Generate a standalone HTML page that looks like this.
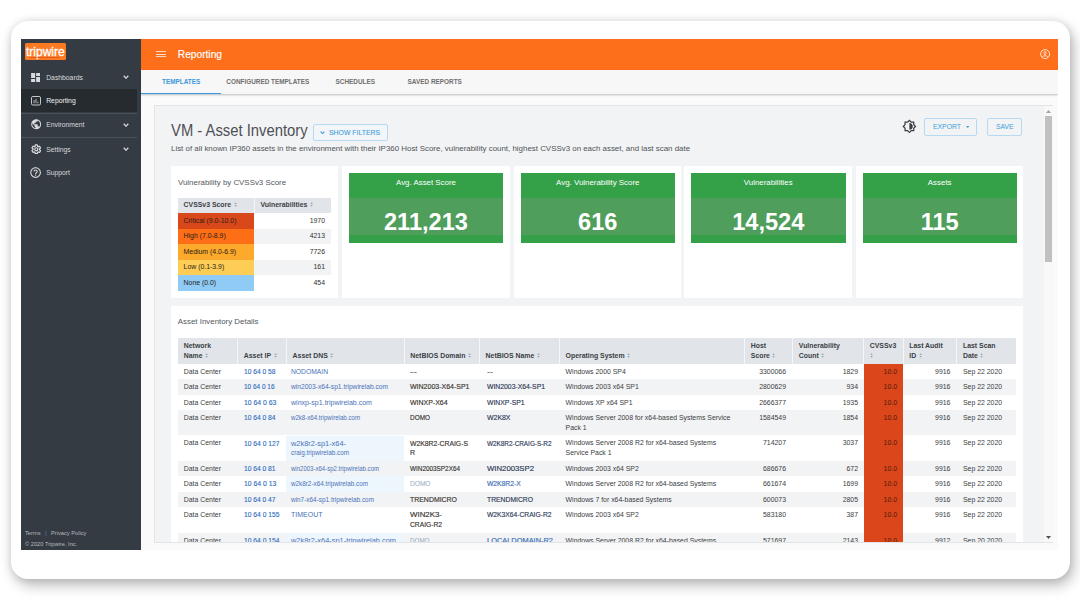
<!DOCTYPE html>
<html><head><meta charset="utf-8">
<style>
*{box-sizing:border-box;margin:0;padding:0}
html,body{width:1080px;height:606px;overflow:hidden;background:#fff;font-family:"Liberation Sans",sans-serif;color:#333}
.abs{position:absolute}
#card{position:absolute;left:11px;top:21px;width:1058.6px;height:557.7px;border-radius:17px;background:#fff;box-shadow:3px 6px 14px rgba(0,0,0,0.28),0 0 8px rgba(0,0,0,0.1)}
#screen{position:absolute;left:21px;top:39px;width:1037px;height:511px;background:#fafafa;overflow:hidden}
#side{position:absolute;left:0;top:0;width:120px;height:511px;background:#353b42}
#hdr{position:absolute;left:120px;top:0;width:917px;height:31px;background:#fd6f1b}
#tabs{position:absolute;left:120px;top:31px;width:917px;height:24px;background:#f7f7f7;box-shadow:0 1px 2px rgba(0,0,0,0.25)}
.tab{position:absolute;top:0;height:24px;line-height:24px;font-size:6.4px;font-weight:bold;color:#6f6f6f;letter-spacing:0}
.txt{position:absolute;white-space:nowrap}
</style></head><body>
<div id="card"></div>
<div id="screen">
  <div id="side">
    <div class="abs" style="left:4px;top:4px;width:40.8px;height:17px;background:#fd7a22;border-radius:1.5px;overflow:hidden">
      <div class="txt" style="left:0.6px;top:0.02px;font-size:13.5px;line-height:17px;color:#fff;transform:scaleX(0.89);transform-origin:0 0;-webkit-text-stroke:0.35px #fff">tripwire</div>
      <div class="abs" style="left:5px;top:14.3px;width:30px;height:0.6px;background:#d9461b;opacity:0.6"></div>
    </div>
    <svg class="abs" style="left:9.9px;top:33.8px" width="9.3" height="9.1" viewBox="3 3 18 18"><path fill="#d9dcdf" d="M3 13h8V3H3v10zm0 8h8v-6H3v6zm10 0h8V11h-8v10zm0-18v6h8V3h-8z"/></svg>
    <div class="txt" style="left:25.2px;top:36.2px;font-size:6.8px;line-height:6.8px;color:#d6d9dc">Dashboards</div>
    <svg class="abs" style="left:101.75px;top:36.4px" width="6" height="4" viewBox="0 0 6 4"><path d="M0.7 0.7L3 3.2L5.3 0.7" fill="none" stroke="#d0d3d6" stroke-width="1.3"/></svg>
    <div class="abs" style="left:0;top:50px;width:116px;height:22.5px;background:#262b30"></div>
    <svg class="abs" style="left:9.6px;top:57.2px" width="10" height="9.5" viewBox="0 0 20 19"><rect x="1" y="1" width="18" height="17" rx="2.5" fill="none" stroke="#d9dcdf" stroke-width="1.8"/><rect x="5.3" y="8" width="1.6" height="6.5" fill="#d9dcdf"/><rect x="9.2" y="5.5" width="1.6" height="9" fill="#d9dcdf"/><rect x="13.1" y="11.5" width="1.6" height="3" fill="#d9dcdf"/></svg>
    <div class="txt" style="left:25.2px;top:58.9px;font-size:6.8px;line-height:6.8px;color:#f0f1f2">Reporting</div>
    <div class="abs" style="left:0;top:74.2px;width:116px;height:1px;background:#4b5158"></div>
    <svg class="abs" style="left:9.7px;top:80.3px" width="10.4" height="10.4" viewBox="1.5 1.5 21 21"><path fill="#d9dcdf" d="M12 2C6.48 2 2 6.48 2 12s4.48 10 10 10 10-4.48 10-10S17.52 2 12 2zm-1 17.93c-3.95-.49-7-3.85-7-7.93 0-.62.08-1.21.21-1.79L9 15v1c0 1.1.9 2 2 2v1.93zm6.9-2.54c-.26-.81-1-1.39-1.9-1.39h-1v-3c0-.55-.45-1-1-1H8v-2h2c.55 0 1-.45 1-1V7h2c1.1 0 2-.9 2-2v-.41c2.93 1.19 5 4.06 5 7.41 0 2.08-.8 3.97-2.1 5.39z"/></svg>
    <div class="txt" style="left:25.2px;top:83.0px;font-size:6.8px;line-height:6.8px;color:#d6d9dc">Environment</div>
    <svg class="abs" style="left:101.75px;top:84.4px" width="6" height="4" viewBox="0 0 6 4"><path d="M0.7 0.7L3 3.2L5.3 0.7" fill="none" stroke="#d0d3d6" stroke-width="1.3"/></svg>
    <div class="abs" style="left:0;top:97.8px;width:116px;height:1px;background:#4b5158"></div>
    <svg class="abs" style="left:9.6px;top:104.8px" width="10.6" height="10.6" viewBox="0 0 24 24"><path fill="none" stroke="#d9dcdf" stroke-width="2.8" d="M19.43 12.98c.04-.32.07-.64.07-.98s-.03-.66-.07-.98l2.11-1.65c.19-.15.24-.42.12-.64l-2-3.46c-.12-.22-.39-.3-.61-.22l-2.49 1c-.52-.4-1.08-.73-1.69-.98l-.38-2.65C14.46 2.18 14.25 2 14 2h-4c-.25 0-.46.18-.49.42l-.38 2.65c-.61.25-1.17.59-1.69.98l-2.49-1c-.23-.09-.49 0-.61.22l-2 3.46c-.13.22-.07.49.12.64l2.11 1.65c-.04.32-.07.65-.07.98s.03.66.07.98l-2.11 1.65c-.19.15-.24.42-.12.64l2 3.46c.12.22.39.3.61.22l2.49-1c.52.4 1.08.73 1.69.98l.38 2.650c.03.24.24.42.49.42h4c.25 0 .46-.18.49-.42l.38-2.65c.61-.25 1.17-.59 1.69-.98l2.49 1c.23.09.49 0 .61-.22l2-3.46c.12-.22.07-.49-.12-.64l-2.11-1.65zM12 15.5c-1.93 0-3.5-1.57-3.5-3.5s1.57-3.5 3.5-3.5 3.5 1.57 3.5 3.5-1.57 3.5-3.5 3.5z" /></svg>
    <div class="txt" style="left:25.2px;top:107.7px;font-size:6.8px;line-height:6.8px;color:#d6d9dc">Settings</div>
    <svg class="abs" style="left:101.75px;top:108.4px" width="6" height="4" viewBox="0 0 6 4"><path d="M0.7 0.7L3 3.2L5.3 0.7" fill="none" stroke="#d0d3d6" stroke-width="1.3"/></svg>
    <svg class="abs" style="left:9.2px;top:128.2px" width="11.2" height="11.2" viewBox="1.5 1.5 21 21"><path fill="#d9dcdf" d="M11 18h2v-2h-2v2zm1-16C6.48 2 2 6.48 2 12s4.48 10 10 10 10-4.48 10-10S17.52 2 12 2zm0 18c-4.41 0-8-3.59-8-8s3.59-8 8-8 8 3.59 8 8-3.59 8-8 8zm0-14c-2.21 0-4 1.79-4 4h2c0-1.1.9-2 2-2s2 .9 2 2c0 2-3 1.75-3 5h2c0-2.25 3-2.5 3-5 0-2.21-1.79-4-4-4z"/></svg>
    <div class="txt" style="left:25.2px;top:131.0px;font-size:6.8px;line-height:6.8px;color:#d6d9dc">Support</div>
    <div class="txt" style="left:4px;top:491.6px;font-size:5.7px;line-height:5.7px;color:#b5babf">Terms<span style="color:#5b8bd0;margin:0 4.2px 0 4.8px">|</span>Privacy Policy</div>
    <div class="txt" style="left:4px;top:502.9px;font-size:5.7px;line-height:5.7px;color:#b5babf">© 2020 Tripwire, Inc.</div>
  </div>
  <div id="hdr">
    <div class="abs" style="left:15.3px;top:12px;width:9.3px;height:0.85px;background:rgba(255,240,230,0.85)"></div>
    <div class="abs" style="left:15.3px;top:14.6px;width:9.3px;height:0.85px;background:rgba(255,240,230,0.85)"></div>
    <div class="abs" style="left:15.3px;top:17.4px;width:9.3px;height:0.85px;background:rgba(255,240,230,0.85)"></div>
    <div class="txt" style="left:36.8px;top:10.8px;font-size:10.2px;line-height:10.2px;color:#fff;-webkit-text-stroke:0.15px #fff">Reporting</div>
    <svg class="abs" style="left:899px;top:9.9px" width="10.2" height="10.2" viewBox="0 0 20 20"><circle cx="10" cy="10" r="8.8" fill="none" stroke="#fff2e8" stroke-width="1.8"/><ellipse cx="10" cy="8" rx="2.2" ry="3" fill="none" stroke="#fff2e8" stroke-width="1.5"/><path d="M4.5 15.5c1.5-1.6 3.5-2.3 5.5-2.3s4 .7 5.5 2.3" fill="none" stroke="#fff2e8" stroke-width="1.6"/></svg>
  </div>
  <div id="tabs">
    <div class="tab" style="left:21px;color:#3b97dc">TEMPLATES</div>
    <div class="tab" style="left:85.3px">CONFIGURED TEMPLATES</div>
    <div class="tab" style="left:194.6px">SCHEDULES</div>
    <div class="tab" style="left:266.6px">SAVED REPORTS</div>
    <div class="abs" style="left:0;top:22.5px;width:79.5px;height:1.6px;background:#3b97dc"></div>
  </div>
</div>
<div class="abs" style="left:153.50px;top:105.30px;width:899.00px;height:437.70px;background:#f2f3f5;border:1px solid #e2e4e7"></div>
<div class="abs" style="left:0;top:0;width:1080px;height:606px;clip-path:inset(106.3px 28px 64px 154.5px)">
<div class="txt" style="left:170.60px;top:121.79px;font-size:16.2px;line-height:16.2px;color:#4d5056;transform:scaleX(0.915);transform-origin:0 0">VM - Asset Inventory</div>
<div class="abs" style="left:313.00px;top:123.70px;width:75.40px;height:17.30px;border:1px solid #b6daf3;border-radius:2px;background:#f3f6f9"></div>
<svg class="abs" style="left:320px;top:131px" width="5" height="3.4" viewBox="0 0 5 3.4"><path d="M0.6 0.6L2.5 2.6L4.4 0.6" fill="none" stroke="#419dda" stroke-width="1.1"/></svg>
<div class="txt" style="left:328.70px;top:128.77px;font-size:7.6px;line-height:7.6px;color:#419dda;-webkit-text-stroke:0.1px #419dda;transform:scaleX(0.906);transform-origin:0 0">SHOW FILTERS</div>
<div class="txt" style="left:171.00px;top:144.50px;font-size:7.92px;line-height:7.92px;color:#4f5357;">List of all known IP360 assets in the environment with their IP360 Host Score, vulnerability count, highest CVSSv3 on each asset, and last scan date</div>
<svg class="abs" style="left:902px;top:119.3px" width="14.8" height="14.8" viewBox="0 0 24 24"><path fill="#3a3d41" d="M20 15.31L23.31 12 20 8.69V4h-4.69L12 .69 8.69 4H4v4.69L.69 12 4 15.31V20h4.69L12 23.31 15.31 20H20v-4.69zm-2-.83V18h-3.52L12 20.48 9.52 18H6v-3.52L3.52 12 6 9.52V6h3.52L12 3.52 14.48 6H18v3.52L20.48 12 18 14.48zM12 6.5v11c3.03 0 5.5-2.47 5.5-5.5S15.03 6.5 12 6.5z"/></svg>
<div class="abs" style="left:924.40px;top:118.00px;width:52.50px;height:17.50px;border:1px solid #b6daf3;border-radius:2px"></div>
<div class="txt" style="left:933.10px;top:123.15px;font-size:7.8px;line-height:7.8px;color:#419dda;transform:scaleX(0.874);transform-origin:0 0">EXPORT</div>
<svg class="abs" style="left:965.6px;top:126.2px" width="3.4" height="2" viewBox="0 0 4 2.4"><path d="M0 0H4L2 2.4z" fill="#419dda"/></svg>
<div class="abs" style="left:987.25px;top:118.00px;width:34.25px;height:17.50px;border:1px solid #b6daf3;border-radius:2px"></div>
<div class="txt" style="left:995.60px;top:123.15px;font-size:7.8px;line-height:7.8px;color:#419dda;transform:scaleX(0.866);transform-origin:0 0">SAVE</div>
<div class="abs" style="left:171.00px;top:165.60px;width:167.20px;height:132.80px;background:#fff"></div>
<div class="abs" style="left:342.00px;top:165.60px;width:167.50px;height:132.80px;background:#fff"></div>
<div class="abs" style="left:514.00px;top:165.60px;width:167.00px;height:132.80px;background:#fff"></div>
<div class="abs" style="left:684.00px;top:165.60px;width:168.00px;height:132.80px;background:#fff"></div>
<div class="abs" style="left:855.50px;top:165.60px;width:167.90px;height:132.80px;background:#fff"></div>
<div class="abs" style="left:349.00px;top:173.00px;width:154.00px;height:70.00px;background:#34a048"></div>
<div class="abs" style="left:349.00px;top:197.80px;width:154.00px;height:37.60px;background:#4f9e5b"></div>
<div class="txt" style="left:226.00px;width:400px;text-align:center;top:179.31px;font-size:7.9px;line-height:7.9px;color:#fff;">Avg. Asset Score</div>
<div class="txt" style="left:226.00px;width:400px;text-align:center;top:211.02px;font-size:23.6px;line-height:23.6px;color:#fff;font-weight:bold">211,213</div>
<div class="abs" style="left:521.00px;top:173.00px;width:153.50px;height:70.00px;background:#34a048"></div>
<div class="abs" style="left:521.00px;top:197.80px;width:153.50px;height:37.60px;background:#4f9e5b"></div>
<div class="txt" style="left:397.75px;width:400px;text-align:center;top:179.31px;font-size:7.9px;line-height:7.9px;color:#fff;">Avg. Vulnerability Score</div>
<div class="txt" style="left:397.75px;width:400px;text-align:center;top:211.02px;font-size:23.6px;line-height:23.6px;color:#fff;font-weight:bold">616</div>
<div class="abs" style="left:691.00px;top:173.00px;width:154.50px;height:70.00px;background:#34a048"></div>
<div class="abs" style="left:691.00px;top:197.80px;width:154.50px;height:37.60px;background:#4f9e5b"></div>
<div class="txt" style="left:568.25px;width:400px;text-align:center;top:179.31px;font-size:7.9px;line-height:7.9px;color:#fff;">Vulnerabilities</div>
<div class="txt" style="left:568.25px;width:400px;text-align:center;top:211.02px;font-size:23.6px;line-height:23.6px;color:#fff;font-weight:bold">14,524</div>
<div class="abs" style="left:862.50px;top:173.00px;width:154.40px;height:70.00px;background:#34a048"></div>
<div class="abs" style="left:862.50px;top:197.80px;width:154.40px;height:37.60px;background:#4f9e5b"></div>
<div class="txt" style="left:739.70px;width:400px;text-align:center;top:179.31px;font-size:7.9px;line-height:7.9px;color:#fff;">Assets</div>
<div class="txt" style="left:739.70px;width:400px;text-align:center;top:211.02px;font-size:23.6px;line-height:23.6px;color:#fff;font-weight:bold">115</div>
<div class="txt" style="left:178.00px;top:178.71px;font-size:7.9px;line-height:7.9px;color:#54585d;">Vulnerability by CVSSv3 Score</div>
<div class="abs" style="left:177.50px;top:197.50px;width:153.50px;height:15.60px;background:#e1e5ea"></div>
<div class="abs" style="left:254.00px;top:197.50px;width:1.00px;height:15.60px;background:#f4f6f8"></div>
<div class="txt" style="left:183.60px;top:201.96px;font-size:6.9px;line-height:6.9px;color:#3b3f44;font-weight:bold">CVSSv3 Score<svg width="3.2" height="5" viewBox="0 0 4 6" style="margin-left:2.5px;vertical-align:-0.3px"><path d="M2 0.3L3.6 2.3H0.4z M2 5.7L3.6 3.7H0.4z" fill="#9aa3ad"/></svg></div>
<div class="txt" style="left:260.50px;top:201.96px;font-size:6.9px;line-height:6.9px;color:#3b3f44;font-weight:bold">Vulnerabilities<svg width="3.2" height="5" viewBox="0 0 4 6" style="margin-left:2.5px;vertical-align:-0.3px"><path d="M2 0.3L3.6 2.3H0.4z M2 5.7L3.6 3.7H0.4z" fill="#9aa3ad"/></svg></div>
<div class="abs" style="left:177.50px;top:213.10px;width:76.50px;height:15.50px;background:#d9481b"></div>
<div class="abs" style="left:254.00px;top:213.10px;width:77.00px;height:15.50px;background:#fff"></div>
<div class="txt" style="left:183.60px;top:217.56px;font-size:6.9px;line-height:6.9px;color:#2a1d18;">Critical (9.0-10.0)</div>
<div class="txt" style="left:25.00px;width:300px;text-align:right;top:217.56px;font-size:6.9px;line-height:6.9px;color:#333;">1970</div>
<div class="abs" style="left:177.50px;top:228.60px;width:76.50px;height:15.50px;background:#fd6e17"></div>
<div class="abs" style="left:254.00px;top:228.60px;width:77.00px;height:15.50px;background:#f2f3f5"></div>
<div class="txt" style="left:183.60px;top:233.06px;font-size:6.9px;line-height:6.9px;color:#2a1d18;">High (7.0-8.9)</div>
<div class="txt" style="left:25.00px;width:300px;text-align:right;top:233.06px;font-size:6.9px;line-height:6.9px;color:#333;">4213</div>
<div class="abs" style="left:177.50px;top:244.10px;width:76.50px;height:15.50px;background:#fda92b"></div>
<div class="abs" style="left:254.00px;top:244.10px;width:77.00px;height:15.50px;background:#fff"></div>
<div class="txt" style="left:183.60px;top:248.56px;font-size:6.9px;line-height:6.9px;color:#2a1d18;">Medium (4.0-6.9)</div>
<div class="txt" style="left:25.00px;width:300px;text-align:right;top:248.56px;font-size:6.9px;line-height:6.9px;color:#333;">7726</div>
<div class="abs" style="left:177.50px;top:259.60px;width:76.50px;height:15.50px;background:#fecd55"></div>
<div class="abs" style="left:254.00px;top:259.60px;width:77.00px;height:15.50px;background:#f2f3f5"></div>
<div class="txt" style="left:183.60px;top:264.06px;font-size:6.9px;line-height:6.9px;color:#2a1d18;">Low (0.1-3.9)</div>
<div class="txt" style="left:25.00px;width:300px;text-align:right;top:264.06px;font-size:6.9px;line-height:6.9px;color:#333;">161</div>
<div class="abs" style="left:177.50px;top:275.10px;width:76.50px;height:15.50px;background:#8fcbf4"></div>
<div class="abs" style="left:254.00px;top:275.10px;width:77.00px;height:15.50px;background:#fff"></div>
<div class="txt" style="left:183.60px;top:279.56px;font-size:6.9px;line-height:6.9px;color:#2a1d18;">None (0.0)</div>
<div class="txt" style="left:25.00px;width:300px;text-align:right;top:279.56px;font-size:6.9px;line-height:6.9px;color:#333;">454</div>
<div class="abs" style="left:171.00px;top:306.40px;width:852.40px;height:253.60px;background:#fff"></div>
<div class="txt" style="left:177.80px;top:318.31px;font-size:7.9px;line-height:7.9px;color:#54585d;">Asset Inventory Details</div>
<div class="abs" style="left:177.50px;top:338.20px;width:838.50px;height:25.50px;background:#e1e5ea"></div>
<div class="abs" style="left:237.00px;top:338.20px;width:1.00px;height:25.50px;background:#f4f6f8"></div>
<div class="abs" style="left:285.80px;top:338.20px;width:1.00px;height:25.50px;background:#f4f6f8"></div>
<div class="abs" style="left:403.50px;top:338.20px;width:1.00px;height:25.50px;background:#f4f6f8"></div>
<div class="abs" style="left:478.80px;top:338.20px;width:1.00px;height:25.50px;background:#f4f6f8"></div>
<div class="abs" style="left:558.80px;top:338.20px;width:1.00px;height:25.50px;background:#f4f6f8"></div>
<div class="abs" style="left:744.00px;top:338.20px;width:1.00px;height:25.50px;background:#f4f6f8"></div>
<div class="abs" style="left:792.00px;top:338.20px;width:1.00px;height:25.50px;background:#f4f6f8"></div>
<div class="abs" style="left:863.00px;top:338.20px;width:1.00px;height:25.50px;background:#f4f6f8"></div>
<div class="abs" style="left:902.50px;top:338.20px;width:1.00px;height:25.50px;background:#f4f6f8"></div>
<div class="abs" style="left:956.20px;top:338.20px;width:1.00px;height:25.50px;background:#f4f6f8"></div>
<div class="txt" style="left:183.80px;top:342.76px;font-size:6.9px;line-height:6.9px;color:#3b3f44;font-weight:bold">Network</div>
<div class="txt" style="left:183.80px;top:352.56px;font-size:6.9px;line-height:6.9px;color:#3b3f44;font-weight:bold">Name<svg width="3.2" height="5" viewBox="0 0 4 6" style="margin-left:2.5px;vertical-align:-0.3px"><path d="M2 0.3L3.6 2.3H0.4z M2 5.7L3.6 3.7H0.4z" fill="#9aa3ad"/></svg></div>
<div class="txt" style="left:243.80px;top:352.56px;font-size:6.9px;line-height:6.9px;color:#3b3f44;font-weight:bold">Asset IP<svg width="3.2" height="5" viewBox="0 0 4 6" style="margin-left:2.5px;vertical-align:-0.3px"><path d="M2 0.3L3.6 2.3H0.4z M2 5.7L3.6 3.7H0.4z" fill="#9aa3ad"/></svg></div>
<div class="txt" style="left:292.60px;top:352.56px;font-size:6.9px;line-height:6.9px;color:#3b3f44;font-weight:bold">Asset DNS<svg width="3.2" height="5" viewBox="0 0 4 6" style="margin-left:2.5px;vertical-align:-0.3px"><path d="M2 0.3L3.6 2.3H0.4z M2 5.7L3.6 3.7H0.4z" fill="#9aa3ad"/></svg></div>
<div class="txt" style="left:410.30px;top:352.56px;font-size:6.9px;line-height:6.9px;color:#3b3f44;font-weight:bold">NetBIOS Domain<svg width="3.2" height="5" viewBox="0 0 4 6" style="margin-left:2.5px;vertical-align:-0.3px"><path d="M2 0.3L3.6 2.3H0.4z M2 5.7L3.6 3.7H0.4z" fill="#9aa3ad"/></svg></div>
<div class="txt" style="left:485.60px;top:352.56px;font-size:6.9px;line-height:6.9px;color:#3b3f44;font-weight:bold">NetBIOS Name<svg width="3.2" height="5" viewBox="0 0 4 6" style="margin-left:2.5px;vertical-align:-0.3px"><path d="M2 0.3L3.6 2.3H0.4z M2 5.7L3.6 3.7H0.4z" fill="#9aa3ad"/></svg></div>
<div class="txt" style="left:565.60px;top:352.56px;font-size:6.9px;line-height:6.9px;color:#3b3f44;font-weight:bold">Operating System<svg width="3.2" height="5" viewBox="0 0 4 6" style="margin-left:2.5px;vertical-align:-0.3px"><path d="M2 0.3L3.6 2.3H0.4z M2 5.7L3.6 3.7H0.4z" fill="#9aa3ad"/></svg></div>
<div class="txt" style="left:750.80px;top:342.76px;font-size:6.9px;line-height:6.9px;color:#3b3f44;font-weight:bold">Host</div>
<div class="txt" style="left:750.80px;top:352.56px;font-size:6.9px;line-height:6.9px;color:#3b3f44;font-weight:bold">Score<svg width="3.2" height="5" viewBox="0 0 4 6" style="margin-left:2.5px;vertical-align:-0.3px"><path d="M2 0.3L3.6 2.3H0.4z M2 5.7L3.6 3.7H0.4z" fill="#9aa3ad"/></svg></div>
<div class="txt" style="left:798.80px;top:342.76px;font-size:6.9px;line-height:6.9px;color:#3b3f44;font-weight:bold">Vulnerability</div>
<div class="txt" style="left:798.80px;top:352.56px;font-size:6.9px;line-height:6.9px;color:#3b3f44;font-weight:bold">Count<svg width="3.2" height="5" viewBox="0 0 4 6" style="margin-left:2.5px;vertical-align:-0.3px"><path d="M2 0.3L3.6 2.3H0.4z M2 5.7L3.6 3.7H0.4z" fill="#9aa3ad"/></svg></div>
<div class="txt" style="left:869.80px;top:342.76px;font-size:6.9px;line-height:6.9px;color:#3b3f44;font-weight:bold">CVSSv3</div>
<div class="txt" style="left:869.80px;top:352.56px;font-size:6.9px;line-height:6.9px;color:#3b3f44;font-weight:bold"><svg width="3.2" height="5" viewBox="0 0 4 6" style="margin-left:0.5px;vertical-align:-0.3px"><path d="M2 0.3L3.6 2.3H0.4z M2 5.7L3.6 3.7H0.4z" fill="#9aa3ad"/></svg></div>
<div class="txt" style="left:909.30px;top:342.76px;font-size:6.9px;line-height:6.9px;color:#3b3f44;font-weight:bold">Last Audit</div>
<div class="txt" style="left:909.30px;top:352.56px;font-size:6.9px;line-height:6.9px;color:#3b3f44;font-weight:bold">ID<svg width="3.2" height="5" viewBox="0 0 4 6" style="margin-left:2.5px;vertical-align:-0.3px"><path d="M2 0.3L3.6 2.3H0.4z M2 5.7L3.6 3.7H0.4z" fill="#9aa3ad"/></svg></div>
<div class="txt" style="left:963.00px;top:342.76px;font-size:6.9px;line-height:6.9px;color:#3b3f44;font-weight:bold">Last Scan</div>
<div class="txt" style="left:963.00px;top:352.56px;font-size:6.9px;line-height:6.9px;color:#3b3f44;font-weight:bold">Date<svg width="3.2" height="5" viewBox="0 0 4 6" style="margin-left:2.5px;vertical-align:-0.3px"><path d="M2 0.3L3.6 2.3H0.4z M2 5.7L3.6 3.7H0.4z" fill="#9aa3ad"/></svg></div>
<div class="abs" style="left:177.50px;top:363.70px;width:838.50px;height:15.50px;background:#fff"></div>
<div class="abs" style="left:177.50px;top:379.20px;width:838.50px;height:15.50px;background:#f2f3f5"></div>
<div class="abs" style="left:177.50px;top:394.70px;width:838.50px;height:15.50px;background:#fff"></div>
<div class="abs" style="left:177.50px;top:410.20px;width:838.50px;height:25.30px;background:#f2f3f5"></div>
<div class="abs" style="left:177.50px;top:435.50px;width:838.50px;height:25.30px;background:#fff"></div>
<div class="abs" style="left:286.30px;top:435.50px;width:117.70px;height:25.30px;background:#eef6fd"></div>
<div class="abs" style="left:177.50px;top:460.80px;width:838.50px;height:15.50px;background:#f2f3f5"></div>
<div class="abs" style="left:177.50px;top:476.30px;width:838.50px;height:15.50px;background:#fff"></div>
<div class="abs" style="left:286.30px;top:476.30px;width:117.70px;height:15.50px;background:#eef6fd"></div>
<div class="abs" style="left:177.50px;top:491.80px;width:838.50px;height:15.50px;background:#f2f3f5"></div>
<div class="abs" style="left:177.50px;top:507.30px;width:838.50px;height:25.30px;background:#fff"></div>
<div class="abs" style="left:177.50px;top:532.60px;width:838.50px;height:15.50px;background:#f2f3f5"></div>
<div class="abs" style="left:286.30px;top:532.60px;width:117.70px;height:15.50px;background:#eef6fd"></div>
<div class="abs" style="left:863.50px;top:363.70px;width:39.50px;height:196.30px;background:#dc461b"></div>
<div class="txt" style="left:183.80px;top:366.66px;font-size:6.9px;line-height:9.9px;color:#3a3d41;">Data Center</div>
<svg class="abs" style="left:244.20px;top:365.72px;overflow:visible" width="31.5" height="10.4"><text x="0" y="8.28" font-family="Liberation Sans" font-size="6.9" textLength="31.5" lengthAdjust="spacingAndGlyphs" fill="#2d6cc0" style="stroke:#2d6cc0;stroke-width:0.12px">10 64 0 58</text></svg>
<svg class="abs" style="left:291.40px;top:365.72px;overflow:visible" width="37.0" height="10.4"><text x="0" y="8.28" font-family="Liberation Sans" font-size="6.9" textLength="37.0" lengthAdjust="spacingAndGlyphs" fill="#4a72b8" style="">NODOMAIN</text></svg>
<svg class="abs" style="left:409.50px;top:365.72px;overflow:visible" width="7.0" height="10.4"><text x="0" y="8.28" font-family="Liberation Sans" font-size="6.9" textLength="7.0" lengthAdjust="spacingAndGlyphs" fill="#3a3530" style="stroke:#3a3530;stroke-width:0.15px;">--</text></svg>
<svg class="abs" style="left:486.60px;top:365.72px;overflow:visible" width="6.0" height="10.4"><text x="0" y="8.28" font-family="Liberation Sans" font-size="6.9" textLength="6.0" lengthAdjust="spacingAndGlyphs" fill="#2f3b58" style="stroke:#2f3b58;stroke-width:0.15px;">--</text></svg>
<div class="txt" style="left:565.60px;top:366.66px;font-size:6.9px;line-height:9.9px;color:#3a3d41;">Windows 2000 SP4</div>
<div class="txt" style="left:486.00px;width:300px;text-align:right;top:366.66px;font-size:6.9px;line-height:9.9px;color:#3a3d41;">3300066</div>
<div class="txt" style="left:558.00px;width:300px;text-align:right;top:366.66px;font-size:6.9px;line-height:9.9px;color:#3a3d41;">1829</div>
<div class="txt" style="left:597.00px;width:300px;text-align:right;top:366.66px;font-size:6.9px;line-height:9.9px;color:#4a1c08;">10.0</div>
<div class="txt" style="left:650.40px;width:300px;text-align:right;top:366.66px;font-size:6.9px;line-height:9.9px;color:#3a3d41;">9916</div>
<div class="txt" style="left:963.00px;top:366.66px;font-size:6.9px;line-height:9.9px;color:#3a3d41;">Sep 22 2020</div>
<div class="txt" style="left:183.80px;top:382.16px;font-size:6.9px;line-height:9.9px;color:#3a3d41;">Data Center</div>
<svg class="abs" style="left:244.20px;top:381.22px;overflow:visible" width="30.5" height="10.4"><text x="0" y="8.28" font-family="Liberation Sans" font-size="6.9" textLength="30.5" lengthAdjust="spacingAndGlyphs" fill="#2d6cc0" style="stroke:#2d6cc0;stroke-width:0.12px">10 64 0 16</text></svg>
<svg class="abs" style="left:291.40px;top:381.22px;overflow:visible" width="97.0" height="10.4"><text x="0" y="8.28" font-family="Liberation Sans" font-size="6.9" textLength="97.0" lengthAdjust="spacingAndGlyphs" fill="#4a72b8" style="">win2003-x64-sp1.tripwirelab.com</text></svg>
<svg class="abs" style="left:409.50px;top:381.22px;overflow:visible" width="59.5" height="10.4"><text x="0" y="8.28" font-family="Liberation Sans" font-size="6.9" textLength="59.5" lengthAdjust="spacingAndGlyphs" fill="#3a3530" style="stroke:#3a3530;stroke-width:0.15px;">WIN2003-X64-SP1</text></svg>
<svg class="abs" style="left:486.60px;top:381.22px;overflow:visible" width="58.0" height="10.4"><text x="0" y="8.28" font-family="Liberation Sans" font-size="6.9" textLength="58.0" lengthAdjust="spacingAndGlyphs" fill="#2f3b58" style="stroke:#2f3b58;stroke-width:0.15px;">WIN2003-X64-SP1</text></svg>
<div class="txt" style="left:565.60px;top:382.16px;font-size:6.9px;line-height:9.9px;color:#3a3d41;">Windows 2003 x64 SP1</div>
<div class="txt" style="left:486.00px;width:300px;text-align:right;top:382.16px;font-size:6.9px;line-height:9.9px;color:#3a3d41;">2800629</div>
<div class="txt" style="left:558.00px;width:300px;text-align:right;top:382.16px;font-size:6.9px;line-height:9.9px;color:#3a3d41;">934</div>
<div class="txt" style="left:597.00px;width:300px;text-align:right;top:382.16px;font-size:6.9px;line-height:9.9px;color:#4a1c08;">10.0</div>
<div class="txt" style="left:650.40px;width:300px;text-align:right;top:382.16px;font-size:6.9px;line-height:9.9px;color:#3a3d41;">9916</div>
<div class="txt" style="left:963.00px;top:382.16px;font-size:6.9px;line-height:9.9px;color:#3a3d41;">Sep 22 2020</div>
<div class="txt" style="left:183.80px;top:397.66px;font-size:6.9px;line-height:9.9px;color:#3a3d41;">Data Center</div>
<svg class="abs" style="left:244.20px;top:396.72px;overflow:visible" width="32.4" height="10.4"><text x="0" y="8.28" font-family="Liberation Sans" font-size="6.9" textLength="32.4" lengthAdjust="spacingAndGlyphs" fill="#2d6cc0" style="stroke:#2d6cc0;stroke-width:0.12px">10 64 0 63</text></svg>
<svg class="abs" style="left:291.40px;top:396.72px;overflow:visible" width="81.0" height="10.4"><text x="0" y="8.28" font-family="Liberation Sans" font-size="6.9" textLength="81.0" lengthAdjust="spacingAndGlyphs" fill="#4a72b8" style="">winxp-sp1.tripwirelab.com</text></svg>
<svg class="abs" style="left:409.50px;top:396.72px;overflow:visible" width="37.6" height="10.4"><text x="0" y="8.28" font-family="Liberation Sans" font-size="6.9" textLength="37.6" lengthAdjust="spacingAndGlyphs" fill="#3a3530" style="stroke:#3a3530;stroke-width:0.15px;">WINXP-X64</text></svg>
<svg class="abs" style="left:486.60px;top:396.72px;overflow:visible" width="37.6" height="10.4"><text x="0" y="8.28" font-family="Liberation Sans" font-size="6.9" textLength="37.6" lengthAdjust="spacingAndGlyphs" fill="#2f3b58" style="stroke:#2f3b58;stroke-width:0.15px;">WINXP-SP1</text></svg>
<div class="txt" style="left:565.60px;top:397.66px;font-size:6.9px;line-height:9.9px;color:#3a3d41;">Windows XP x64 SP1</div>
<div class="txt" style="left:486.00px;width:300px;text-align:right;top:397.66px;font-size:6.9px;line-height:9.9px;color:#3a3d41;">2666377</div>
<div class="txt" style="left:558.00px;width:300px;text-align:right;top:397.66px;font-size:6.9px;line-height:9.9px;color:#3a3d41;">1935</div>
<div class="txt" style="left:597.00px;width:300px;text-align:right;top:397.66px;font-size:6.9px;line-height:9.9px;color:#4a1c08;">10.0</div>
<div class="txt" style="left:650.40px;width:300px;text-align:right;top:397.66px;font-size:6.9px;line-height:9.9px;color:#3a3d41;">9916</div>
<div class="txt" style="left:963.00px;top:397.66px;font-size:6.9px;line-height:9.9px;color:#3a3d41;">Sep 22 2020</div>
<div class="txt" style="left:183.80px;top:413.16px;font-size:6.9px;line-height:9.9px;color:#3a3d41;">Data Center</div>
<svg class="abs" style="left:244.20px;top:412.22px;overflow:visible" width="31.5" height="10.4"><text x="0" y="8.28" font-family="Liberation Sans" font-size="6.9" textLength="31.5" lengthAdjust="spacingAndGlyphs" fill="#2d6cc0" style="stroke:#2d6cc0;stroke-width:0.12px">10 64 0 84</text></svg>
<svg class="abs" style="left:291.40px;top:412.22px;overflow:visible" width="69.0" height="10.4"><text x="0" y="8.28" font-family="Liberation Sans" font-size="6.9" textLength="69.0" lengthAdjust="spacingAndGlyphs" fill="#4a72b8" style="">w2k8-x64.tripwirelab.com</text></svg>
<svg class="abs" style="left:409.50px;top:412.22px;overflow:visible" width="20.0" height="10.4"><text x="0" y="8.28" font-family="Liberation Sans" font-size="6.9" textLength="20.0" lengthAdjust="spacingAndGlyphs" fill="#3a3530" style="stroke:#3a3530;stroke-width:0.15px;">DOMO</text></svg>
<svg class="abs" style="left:486.60px;top:412.22px;overflow:visible" width="23.5" height="10.4"><text x="0" y="8.28" font-family="Liberation Sans" font-size="6.9" textLength="23.5" lengthAdjust="spacingAndGlyphs" fill="#2f3b58" style="stroke:#2f3b58;stroke-width:0.15px;">W2K8X</text></svg>
<div class="txt" style="left:565.60px;top:413.16px;font-size:6.9px;line-height:9.9px;color:#3a3d41;">Windows Server 2008 for x64-based Systems Service<br>Pack 1</div>
<div class="txt" style="left:486.00px;width:300px;text-align:right;top:413.16px;font-size:6.9px;line-height:9.9px;color:#3a3d41;">1584549</div>
<div class="txt" style="left:558.00px;width:300px;text-align:right;top:413.16px;font-size:6.9px;line-height:9.9px;color:#3a3d41;">1854</div>
<div class="txt" style="left:597.00px;width:300px;text-align:right;top:413.16px;font-size:6.9px;line-height:9.9px;color:#4a1c08;">10.0</div>
<div class="txt" style="left:650.40px;width:300px;text-align:right;top:413.16px;font-size:6.9px;line-height:9.9px;color:#3a3d41;">9916</div>
<div class="txt" style="left:963.00px;top:413.16px;font-size:6.9px;line-height:9.9px;color:#3a3d41;">Sep 22 2020</div>
<div class="txt" style="left:183.80px;top:438.46px;font-size:6.9px;line-height:9.9px;color:#3a3d41;">Data Center</div>
<svg class="abs" style="left:244.20px;top:437.52px;overflow:visible" width="35.6" height="10.4"><text x="0" y="8.28" font-family="Liberation Sans" font-size="6.9" textLength="35.6" lengthAdjust="spacingAndGlyphs" fill="#2d6cc0" style="stroke:#2d6cc0;stroke-width:0.12px">10 64 0 127</text></svg>
<svg class="abs" style="left:291.40px;top:437.52px;overflow:visible" width="55.0" height="10.4"><text x="0" y="8.28" font-family="Liberation Sans" font-size="6.9" textLength="55.0" lengthAdjust="spacingAndGlyphs" fill="#4a72b8" style="">w2k8r2-sp1-x64-</text></svg>
<svg class="abs" style="left:291.40px;top:447.42px;overflow:visible" width="58.0" height="10.4"><text x="0" y="8.28" font-family="Liberation Sans" font-size="6.9" textLength="58.0" lengthAdjust="spacingAndGlyphs" fill="#4a72b8" style="">craig.tripwirelab.com</text></svg>
<svg class="abs" style="left:409.50px;top:437.52px;overflow:visible" width="58.0" height="10.4"><text x="0" y="8.28" font-family="Liberation Sans" font-size="6.9" textLength="58.0" lengthAdjust="spacingAndGlyphs" fill="#3a3530" style="stroke:#3a3530;stroke-width:0.15px;">W2K8R2-CRAIG-S</text></svg>
<svg class="abs" style="left:409.50px;top:447.42px;overflow:visible" width="5.0" height="10.4"><text x="0" y="8.28" font-family="Liberation Sans" font-size="6.9" textLength="5.0" lengthAdjust="spacingAndGlyphs" fill="#3a3530" style="stroke:#3a3530;stroke-width:0.15px;">R</text></svg>
<svg class="abs" style="left:486.60px;top:437.52px;overflow:visible" width="64.5" height="10.4"><text x="0" y="8.28" font-family="Liberation Sans" font-size="6.9" textLength="64.5" lengthAdjust="spacingAndGlyphs" fill="#2f3b58" style="stroke:#2f3b58;stroke-width:0.15px;">W2K8R2-CRAIG-S-R2</text></svg>
<div class="txt" style="left:565.60px;top:438.46px;font-size:6.9px;line-height:9.9px;color:#3a3d41;">Windows Server 2008 R2 for x64-based Systems<br>Service Pack 1</div>
<div class="txt" style="left:486.00px;width:300px;text-align:right;top:438.46px;font-size:6.9px;line-height:9.9px;color:#3a3d41;">714207</div>
<div class="txt" style="left:558.00px;width:300px;text-align:right;top:438.46px;font-size:6.9px;line-height:9.9px;color:#3a3d41;">3037</div>
<div class="txt" style="left:597.00px;width:300px;text-align:right;top:438.46px;font-size:6.9px;line-height:9.9px;color:#4a1c08;">10.0</div>
<div class="txt" style="left:650.40px;width:300px;text-align:right;top:438.46px;font-size:6.9px;line-height:9.9px;color:#3a3d41;">9916</div>
<div class="txt" style="left:963.00px;top:438.46px;font-size:6.9px;line-height:9.9px;color:#3a3d41;">Sep 22 2020</div>
<div class="txt" style="left:183.80px;top:463.76px;font-size:6.9px;line-height:9.9px;color:#3a3d41;">Data Center</div>
<svg class="abs" style="left:244.20px;top:462.82px;overflow:visible" width="31.5" height="10.4"><text x="0" y="8.28" font-family="Liberation Sans" font-size="6.9" textLength="31.5" lengthAdjust="spacingAndGlyphs" fill="#2d6cc0" style="stroke:#2d6cc0;stroke-width:0.12px">10 64 0 81</text></svg>
<svg class="abs" style="left:291.40px;top:462.82px;overflow:visible" width="88.0" height="10.4"><text x="0" y="8.28" font-family="Liberation Sans" font-size="6.9" textLength="88.0" lengthAdjust="spacingAndGlyphs" fill="#4a72b8" style="">win2003-x64-sp2.tripwirelab.com</text></svg>
<svg class="abs" style="left:409.50px;top:462.82px;overflow:visible" width="50.0" height="10.4"><text x="0" y="8.28" font-family="Liberation Sans" font-size="6.9" textLength="50.0" lengthAdjust="spacingAndGlyphs" fill="#3a3530" style="stroke:#3a3530;stroke-width:0.15px;">WIN2003SP2X64</text></svg>
<svg class="abs" style="left:486.60px;top:462.82px;overflow:visible" width="47.0" height="10.4"><text x="0" y="8.28" font-family="Liberation Sans" font-size="6.9" textLength="47.0" lengthAdjust="spacingAndGlyphs" fill="#2f3b58" style="stroke:#2f3b58;stroke-width:0.15px;">WIN2003SP2</text></svg>
<div class="txt" style="left:565.60px;top:463.76px;font-size:6.9px;line-height:9.9px;color:#3a3d41;">Windows 2003 x64 SP2</div>
<div class="txt" style="left:486.00px;width:300px;text-align:right;top:463.76px;font-size:6.9px;line-height:9.9px;color:#3a3d41;">686676</div>
<div class="txt" style="left:558.00px;width:300px;text-align:right;top:463.76px;font-size:6.9px;line-height:9.9px;color:#3a3d41;">672</div>
<div class="txt" style="left:597.00px;width:300px;text-align:right;top:463.76px;font-size:6.9px;line-height:9.9px;color:#4a1c08;">10.0</div>
<div class="txt" style="left:650.40px;width:300px;text-align:right;top:463.76px;font-size:6.9px;line-height:9.9px;color:#3a3d41;">9916</div>
<div class="txt" style="left:963.00px;top:463.76px;font-size:6.9px;line-height:9.9px;color:#3a3d41;">Sep 22 2020</div>
<div class="txt" style="left:183.80px;top:479.26px;font-size:6.9px;line-height:9.9px;color:#3a3d41;">Data Center</div>
<svg class="abs" style="left:244.20px;top:478.32px;overflow:visible" width="32.4" height="10.4"><text x="0" y="8.28" font-family="Liberation Sans" font-size="6.9" textLength="32.4" lengthAdjust="spacingAndGlyphs" fill="#2d6cc0" style="stroke:#2d6cc0;stroke-width:0.12px">10 64 0 13</text></svg>
<svg class="abs" style="left:291.40px;top:478.32px;overflow:visible" width="77.0" height="10.4"><text x="0" y="8.28" font-family="Liberation Sans" font-size="6.9" textLength="77.0" lengthAdjust="spacingAndGlyphs" fill="#4a72b8" style="">w2k8r2-x64.tripwirelab.com</text></svg>
<svg class="abs" style="left:409.50px;top:478.32px;overflow:visible" width="20.5" height="10.4"><text x="0" y="8.28" font-family="Liberation Sans" font-size="6.9" textLength="20.5" lengthAdjust="spacingAndGlyphs" fill="#a9b9cc" style="stroke:#a9b9cc;stroke-width:0.15px;">DOMO</text></svg>
<svg class="abs" style="left:486.60px;top:478.32px;overflow:visible" width="33.7" height="10.4"><text x="0" y="8.28" font-family="Liberation Sans" font-size="6.9" textLength="33.7" lengthAdjust="spacingAndGlyphs" fill="#3b6db5" style="stroke:#3b6db5;stroke-width:0.15px;">W2K8R2-X</text></svg>
<div class="txt" style="left:565.60px;top:479.26px;font-size:6.9px;line-height:9.9px;color:#3a3d41;">Windows Server 2008 R2 for x64-based Systems</div>
<div class="txt" style="left:486.00px;width:300px;text-align:right;top:479.26px;font-size:6.9px;line-height:9.9px;color:#3a3d41;">661674</div>
<div class="txt" style="left:558.00px;width:300px;text-align:right;top:479.26px;font-size:6.9px;line-height:9.9px;color:#3a3d41;">1699</div>
<div class="txt" style="left:597.00px;width:300px;text-align:right;top:479.26px;font-size:6.9px;line-height:9.9px;color:#4a1c08;">10.0</div>
<div class="txt" style="left:650.40px;width:300px;text-align:right;top:479.26px;font-size:6.9px;line-height:9.9px;color:#3a3d41;">9916</div>
<div class="txt" style="left:963.00px;top:479.26px;font-size:6.9px;line-height:9.9px;color:#3a3d41;">Sep 22 2020</div>
<div class="txt" style="left:183.80px;top:494.76px;font-size:6.9px;line-height:9.9px;color:#3a3d41;">Data Center</div>
<svg class="abs" style="left:244.20px;top:493.82px;overflow:visible" width="31.5" height="10.4"><text x="0" y="8.28" font-family="Liberation Sans" font-size="6.9" textLength="31.5" lengthAdjust="spacingAndGlyphs" fill="#2d6cc0" style="stroke:#2d6cc0;stroke-width:0.12px">10 64 0 47</text></svg>
<svg class="abs" style="left:291.40px;top:493.82px;overflow:visible" width="83.0" height="10.4"><text x="0" y="8.28" font-family="Liberation Sans" font-size="6.9" textLength="83.0" lengthAdjust="spacingAndGlyphs" fill="#4a72b8" style="">win7-x64-sp1.tripwirelab.com</text></svg>
<svg class="abs" style="left:409.50px;top:493.82px;overflow:visible" width="47.0" height="10.4"><text x="0" y="8.28" font-family="Liberation Sans" font-size="6.9" textLength="47.0" lengthAdjust="spacingAndGlyphs" fill="#3a3530" style="stroke:#3a3530;stroke-width:0.15px;">TRENDMICRO</text></svg>
<svg class="abs" style="left:486.60px;top:493.82px;overflow:visible" width="46.0" height="10.4"><text x="0" y="8.28" font-family="Liberation Sans" font-size="6.9" textLength="46.0" lengthAdjust="spacingAndGlyphs" fill="#2f3b58" style="stroke:#2f3b58;stroke-width:0.15px;">TRENDMICRO</text></svg>
<div class="txt" style="left:565.60px;top:494.76px;font-size:6.9px;line-height:9.9px;color:#3a3d41;">Windows 7 for x64-based Systems</div>
<div class="txt" style="left:486.00px;width:300px;text-align:right;top:494.76px;font-size:6.9px;line-height:9.9px;color:#3a3d41;">600073</div>
<div class="txt" style="left:558.00px;width:300px;text-align:right;top:494.76px;font-size:6.9px;line-height:9.9px;color:#3a3d41;">2805</div>
<div class="txt" style="left:597.00px;width:300px;text-align:right;top:494.76px;font-size:6.9px;line-height:9.9px;color:#4a1c08;">10.0</div>
<div class="txt" style="left:650.40px;width:300px;text-align:right;top:494.76px;font-size:6.9px;line-height:9.9px;color:#3a3d41;">9916</div>
<div class="txt" style="left:963.00px;top:494.76px;font-size:6.9px;line-height:9.9px;color:#3a3d41;">Sep 22 2020</div>
<div class="txt" style="left:183.80px;top:510.26px;font-size:6.9px;line-height:9.9px;color:#3a3d41;">Data Center</div>
<svg class="abs" style="left:244.20px;top:509.32px;overflow:visible" width="35.6" height="10.4"><text x="0" y="8.28" font-family="Liberation Sans" font-size="6.9" textLength="35.6" lengthAdjust="spacingAndGlyphs" fill="#2d6cc0" style="stroke:#2d6cc0;stroke-width:0.12px">10 64 0 155</text></svg>
<svg class="abs" style="left:291.40px;top:509.32px;overflow:visible" width="31.5" height="10.4"><text x="0" y="8.28" font-family="Liberation Sans" font-size="6.9" textLength="31.5" lengthAdjust="spacingAndGlyphs" fill="#4a72b8" style="">TIMEOUT</text></svg>
<svg class="abs" style="left:409.50px;top:509.32px;overflow:visible" width="32.0" height="10.4"><text x="0" y="8.28" font-family="Liberation Sans" font-size="6.9" textLength="32.0" lengthAdjust="spacingAndGlyphs" fill="#3a3530" style="stroke:#3a3530;stroke-width:0.15px;">WIN2K3-</text></svg>
<svg class="abs" style="left:409.50px;top:519.22px;overflow:visible" width="32.0" height="10.4"><text x="0" y="8.28" font-family="Liberation Sans" font-size="6.9" textLength="32.0" lengthAdjust="spacingAndGlyphs" fill="#3a3530" style="stroke:#3a3530;stroke-width:0.15px;">CRAIG-R2</text></svg>
<svg class="abs" style="left:486.60px;top:509.32px;overflow:visible" width="64.5" height="10.4"><text x="0" y="8.28" font-family="Liberation Sans" font-size="6.9" textLength="64.5" lengthAdjust="spacingAndGlyphs" fill="#2f3b58" style="stroke:#2f3b58;stroke-width:0.15px;">W2K3X64-CRAIG-R2</text></svg>
<div class="txt" style="left:565.60px;top:510.26px;font-size:6.9px;line-height:9.9px;color:#3a3d41;">Windows 2003 x64 SP2</div>
<div class="txt" style="left:486.00px;width:300px;text-align:right;top:510.26px;font-size:6.9px;line-height:9.9px;color:#3a3d41;">583180</div>
<div class="txt" style="left:558.00px;width:300px;text-align:right;top:510.26px;font-size:6.9px;line-height:9.9px;color:#3a3d41;">387</div>
<div class="txt" style="left:597.00px;width:300px;text-align:right;top:510.26px;font-size:6.9px;line-height:9.9px;color:#4a1c08;">10.0</div>
<div class="txt" style="left:650.40px;width:300px;text-align:right;top:510.26px;font-size:6.9px;line-height:9.9px;color:#3a3d41;">9916</div>
<div class="txt" style="left:963.00px;top:510.26px;font-size:6.9px;line-height:9.9px;color:#3a3d41;">Sep 22 2020</div>
<div class="txt" style="left:183.80px;top:535.56px;font-size:6.9px;line-height:9.9px;color:#3a3d41;">Data Center</div>
<svg class="abs" style="left:244.20px;top:534.62px;overflow:visible" width="35.6" height="10.4"><text x="0" y="8.28" font-family="Liberation Sans" font-size="6.9" textLength="35.6" lengthAdjust="spacingAndGlyphs" fill="#2d6cc0" style="stroke:#2d6cc0;stroke-width:0.12px">10 64 0 154</text></svg>
<svg class="abs" style="left:291.40px;top:534.62px;overflow:visible" width="105.0" height="10.4"><text x="0" y="8.28" font-family="Liberation Sans" font-size="6.9" textLength="105.0" lengthAdjust="spacingAndGlyphs" fill="#4a72b8" style="">w2k8r2-x64-sp1-tripwirelab.com</text></svg>
<svg class="abs" style="left:409.50px;top:534.62px;overflow:visible" width="19.5" height="10.4"><text x="0" y="8.28" font-family="Liberation Sans" font-size="6.9" textLength="19.5" lengthAdjust="spacingAndGlyphs" fill="#a9b9cc" style="stroke:#a9b9cc;stroke-width:0.15px;">DOMO</text></svg>
<svg class="abs" style="left:486.60px;top:534.62px;overflow:visible" width="66.0" height="10.4"><text x="0" y="8.28" font-family="Liberation Sans" font-size="6.9" textLength="66.0" lengthAdjust="spacingAndGlyphs" fill="#3b6db5" style="stroke:#3b6db5;stroke-width:0.15px;">LOCALDOMAIN-R2</text></svg>
<div class="txt" style="left:565.60px;top:535.56px;font-size:6.9px;line-height:9.9px;color:#3a3d41;">Windows Server 2008 R2 for x64-based Systems</div>
<div class="txt" style="left:486.00px;width:300px;text-align:right;top:535.56px;font-size:6.9px;line-height:9.9px;color:#3a3d41;">571697</div>
<div class="txt" style="left:558.00px;width:300px;text-align:right;top:535.56px;font-size:6.9px;line-height:9.9px;color:#3a3d41;">2143</div>
<div class="txt" style="left:597.00px;width:300px;text-align:right;top:535.56px;font-size:6.9px;line-height:9.9px;color:#4a1c08;">10.0</div>
<div class="txt" style="left:650.40px;width:300px;text-align:right;top:535.56px;font-size:6.9px;line-height:9.9px;color:#3a3d41;">9912</div>
<div class="txt" style="left:963.00px;top:535.56px;font-size:6.9px;line-height:9.9px;color:#3a3d41;">Sep 20 2020</div>
</div>
<div class="abs" style="left:1043.50px;top:106.30px;width:9.00px;height:436.00px;background:#f8f8f8"></div>
<svg class="abs" style="left:1045.5px;top:109.5px" width="5" height="3" viewBox="0 0 5 3"><path d="M2.5 0L5 3H0z" fill="#a3a3a3"/></svg>
<div class="abs" style="left:1045.00px;top:115.60px;width:6.80px;height:146.40px;background:#c0c0c0"></div>
<svg class="abs" style="left:1045.5px;top:535.5px" width="5" height="3" viewBox="0 0 5 3"><path d="M0 0H5L2.5 3z" fill="#505050"/></svg>
</body></html>
